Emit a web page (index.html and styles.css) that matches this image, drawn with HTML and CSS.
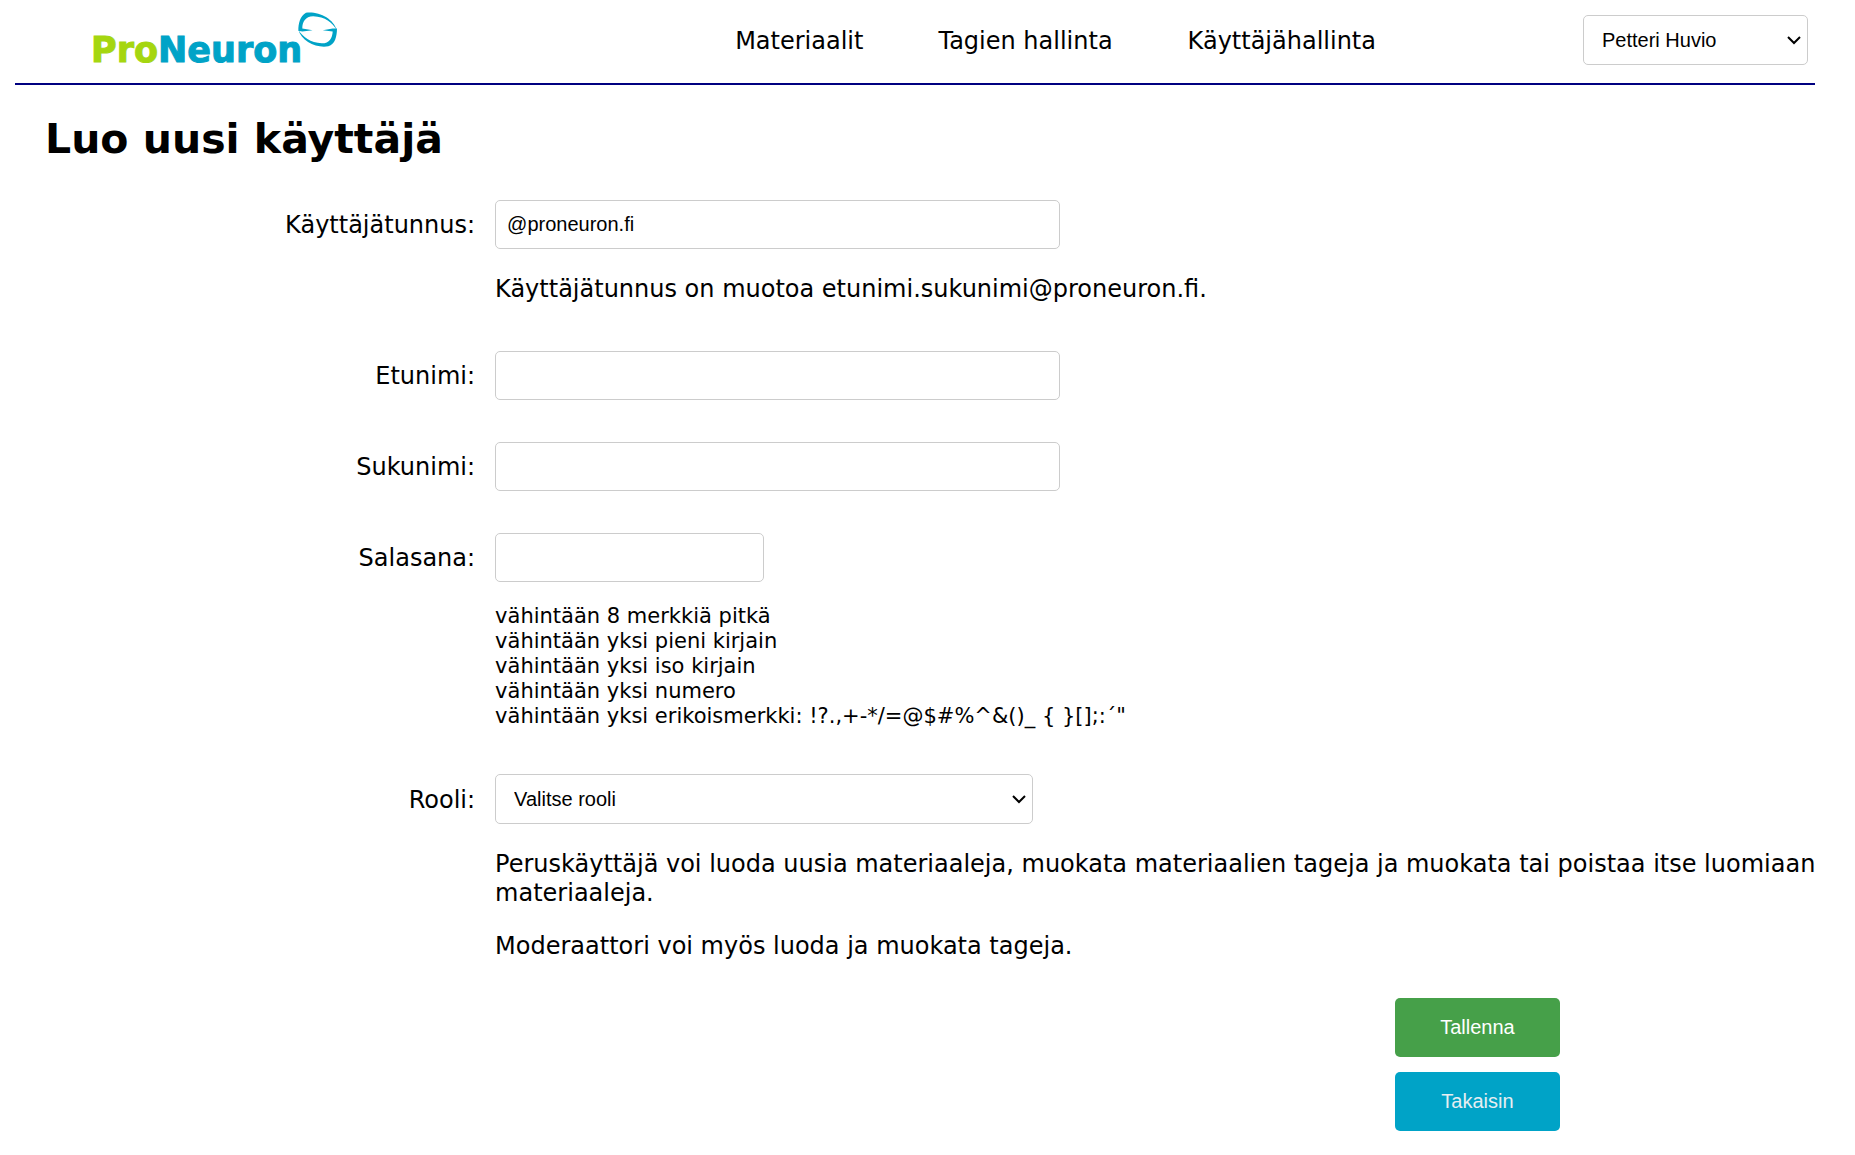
FILE: index.html
```
<!DOCTYPE html>
<html lang="fi">
<head>
<meta charset="utf-8">
<title>Luo uusi käyttäjä</title>
<link rel="stylesheet" href="styles.css">
</head>
<body>
<header class="topbar">
  <a class="logo" href="#" aria-label="ProNeuron">
    <span class="wordmark"><span class="wordmark-pro">Pro</span>Neuron</span>
    <svg class="logo-mark" viewBox="0 0 118 106" aria-hidden="true">
      <path d="M1 57C1 34 6 12 24 2C62-3 108 20 117 54C104 32 82 14 46 13C22 14 13 30 13 50L44 55L13 59Z"/>
      <path d="M118 50C118 74 112 98 92 104C56 111 10 88 1 54C14 76 38 93 72 95C96 95 104 78 105 59L75 55L105 50Z"/>
    </svg>
  </a>
  <nav class="nav">
    <a href="#">Materiaalit</a>
    <a href="#">Tagien hallinta</a>
    <a href="#">Käyttäjähallinta</a>
  </nav>
  <div class="select user-menu">
    <select class="field" aria-label="Käyttäjä">
      <option>Petteri Huvio</option>
    </select>
    <svg class="chevron" viewBox="0 0 14 9" aria-hidden="true"><path d="M1 1L7 7L13 1"/></svg>
  </div>
</header>
<main>
  <h1>Luo uusi käyttäjä</h1>
  <form class="form">
    <div class="row">
      <label for="username">Käyttäjätunnus:</label>
      <input class="field wide" id="username" type="text" value="@proneuron.fi">
      <p class="hint">Käyttäjätunnus on muotoa etunimi.sukunimi@proneuron.fi.</p>
    </div>
    <div class="row">
      <label for="first">Etunimi:</label>
      <input class="field wide" id="first" type="text">
    </div>
    <div class="row">
      <label for="last">Sukunimi:</label>
      <input class="field wide" id="last" type="text">
    </div>
    <div class="row">
      <label for="password">Salasana:</label>
      <input class="field short" id="password" type="password">
      <ul class="hint rules">
        <li>vähintään 8 merkkiä pitkä</li>
        <li>vähintään yksi pieni kirjain</li>
        <li>vähintään yksi iso kirjain</li>
        <li>vähintään yksi numero</li>
        <li>vähintään yksi erikoismerkki: !?.,+-*/=@$#%^&amp;()_ { }[];:´"</li>
      </ul>
    </div>
    <div class="row">
      <label for="role">Rooli:</label>
      <div class="select role">
        <select class="field" id="role">
          <option>Valitse rooli</option>
        </select>
        <svg class="chevron" viewBox="0 0 14 9" aria-hidden="true"><path d="M1 1L7 7L13 1"/></svg>
      </div>
      <div class="hint">
        <p>Peruskäyttäjä voi luoda uusia materiaaleja, muokata materiaalien tageja ja muokata tai poistaa itse luomiaan materiaaleja.</p>
        <p>Moderaattori voi myös luoda ja muokata tageja.</p>
      </div>
    </div>
    <div class="actions">
      <button class="button save" type="submit">Tallenna</button>
      <button class="button back" type="button">Takaisin</button>
    </div>
  </form>
</main>
</body>
</html>
```
FILE: styles.css
```
* {
  box-sizing: border-box;
}

body {
  margin: 0;
  padding: 0 15px;
  background: #fff;
  color: #000;
  font: 24px/29px Verdana, "DejaVu Sans", sans-serif;
}

p, ul {
  margin: 0;
  padding: 0;
}

.topbar {
  display: flex;
  align-items: flex-start;
  margin-right: 25px;
  padding: 12px 7px 16px 76px;
  border-bottom: 2px solid #000080;
}

.logo {
  display: flex;
  align-items: flex-start;
  height: 55px;
  color: #00a3c7;
  text-decoration: none;
}

.wordmark {
  margin-top: 18px;
  font-size: 35px;
  line-height: 41px;
  font-weight: bold;
  -webkit-text-stroke: 1px;
}

.wordmark-pro {
  color: #a5d610;
}

.logo-mark {
  width: 39px;
  height: 35px;
  margin-left: -4px;
  fill: currentColor;
}

.nav {
  display: flex;
  flex: 1;
  justify-content: flex-end;
  gap: 75px;
  padding: 15px 207px 0 0;
}

.nav a {
  color: inherit;
  text-decoration: none;
}

.field {
  height: 49px;
  padding: 0 11px;
  border: 1px solid #ccc;
  border-radius: 5px;
  background: #fff;
  color: #000;
  font: 20px "Liberation Sans", Arial, sans-serif;
}

.select {
  position: relative;
}

.select .field {
  display: block;
  width: 100%;
  height: 50px;
  padding: 0 18px;
  appearance: none;
}

.chevron {
  position: absolute;
  right: 7px;
  top: 21px;
  width: 14px;
  height: 9px;
  fill: none;
  stroke: #000;
  stroke-width: 2;
  pointer-events: none;
}

.user-menu {
  width: 225px;
  margin-top: 3px;
}

h1 {
  margin: 29px 30px 36px;
  font-size: 41px;
  line-height: 50px;
}

.row {
  display: grid;
  grid-template-columns: 13fr 38fr;
  column-gap: 20px;
  align-items: center;
  margin-bottom: 42px;
}

.row:has(.hint) {
  margin-bottom: 47px;
}

.row:has(.rules) {
  margin-bottom: 45px;
}

.row label {
  padding-top: 2px;
  text-align: right;
}

.wide {
  width: 42%;
}

.short {
  width: 20%;
}

.role {
  width: 40%;
}

.hint {
  grid-column: 2;
  margin-top: 26px;
}

.hint p + p {
  margin-top: 24px;
}

.rules {
  margin-top: 22px;
  font-size: 21px;
  line-height: 25px;
  list-style: none;
}

.actions {
  display: flex;
  flex-direction: column;
  align-items: flex-end;
  gap: 15px;
  margin-top: -10px;
  padding: 0 280px 24px 0;
}

.button {
  width: 165px;
  height: 59px;
  border: 0;
  border-radius: 5px;
  color: #fff;
  font: 20px "Liberation Sans", Arial, sans-serif;
}

.save {
  background: #46a049;
}

.back {
  background: #00a3c7;
  color: #e6eef2;
}
```
